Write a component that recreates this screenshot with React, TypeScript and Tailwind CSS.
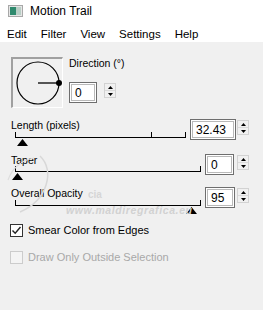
import * as React from 'react'

// Classic Win32 filter dialog: Motion Trail

const SpinButton: React.FC = () => (
  <div className="flex flex-col w-[12px] h-[15px] border border-[#d2d2d2] bg-[#f0f0f0]">
    <div className="flex-1 flex items-center justify-center border-b border-[#dadada]">
      <svg width="5" height="3" viewBox="0 0 5 3">
        <polygon points="2.5,0 5,3 0,3" fill="#000" />
      </svg>
    </div>
    <div className="flex-1 flex items-center justify-center">
      <svg width="5" height="3" viewBox="0 0 5 3">
        <polygon points="0,0 5,0 2.5,3" fill="#000" />
      </svg>
    </div>
  </div>
)

interface NumberBoxProps {
  value: string
  width: string
}

const NumberBox: React.FC<NumberBoxProps> = ({ value, width }) => (
  <div className={`h-[21px] ${width} border border-[#6e6e6e] p-px bg-white`}>
    <div className="h-full w-full border border-[#b9b9b9] bg-white flex items-center pl-[3px] text-[12px] leading-none text-black">
      {value}
    </div>
  </div>
)

const Thumb: React.FC<{ className: string }> = ({ className }) => (
  <svg className={className} width="11" height="7" viewBox="0 0 11 7">
    <polygon points="5.5,0 11,7 0,7" fill="#000" />
  </svg>
)

const Tick: React.FC = () => <div className="w-px h-[5px] bg-black" />

const Checkbox: React.FC<{ checked?: boolean; disabled?: boolean }> = ({ checked, disabled }) => (
  <div
    className={`w-[13px] h-[13px] border flex items-center justify-center ${
      disabled ? 'border-[#cccccc] bg-[#f4f4f4]' : 'border-[#333333] bg-white'
    }`}
  >
    {checked && (
      <svg width="11" height="11" viewBox="0 0 11 11">
        <polyline points="1.5,5.5 4.2,8.3 9.5,2" fill="none" stroke="#222" strokeWidth="1.4" />
      </svg>
    )}
  </div>
)

export default function App() {
  return (
    <div className="relative w-[263px] h-[310px] overflow-hidden flex flex-col bg-[#f0f0f0] font-['Liberation_Sans',Arial,sans-serif] text-black">
      {/* Title bar */}
      <div className="h-[22px] bg-white flex items-center pl-[8px]">
        <div className="w-[15px] h-[12px] border border-[#a8a8a8] bg-[#e6e6e6] p-px flex">
          <div className="w-[6px] h-full bg-[#2f8a6e]" />
          <div className="flex-1 h-full bg-[#b9cfc6]" />
        </div>
        <span className="ml-[7px] text-[12px] leading-[14px]">Motion Trail</span>
      </div>

      {/* Menu bar */}
      <div className="h-[20px] bg-white flex items-start pt-[5px] pl-[7px] gap-[14px] text-[11.5px] leading-[14px]">
        <span>Edit</span>
        <span>Filter</span>
        <span>View</span>
        <span>Settings</span>
        <span>Help</span>
      </div>

      {/* Body */}
      <div className="flex-1 flex flex-col text-[10.5px] leading-[13px]">
        {/* Direction */}
        <div className="mt-[15px] ml-[11px] flex">
          <div className="w-[52px] h-[51px] border-l-2 border-t-2 border-[#a0a0a0] border-r border-b border-r-white border-b-white">
            <svg width="49" height="48" viewBox="0 0 49 48">
              <circle cx="25" cy="24" r="21" fill="none" stroke="#000" strokeWidth="1.2" />
              <line x1="25" y1="24" x2="46" y2="24" stroke="#555" strokeWidth="2" />
              <circle cx="46" cy="24" r="3" fill="#000" />
            </svg>
          </div>
          <div className="ml-[6px] flex flex-col">
            <span>Direction (°)</span>
            <div className="mt-[12px] flex items-start">
              <NumberBox value="0" width="w-[28px]" />
              <div className="ml-[7px] mt-px">
                <SpinButton />
              </div>
            </div>
          </div>
        </div>

        {/* Length */}
        <div className="mt-[11px] flex items-start">
          <div className="w-[190px] flex flex-col">
            <span className="pl-[11px]">Length (pixels)</span>
            <div className="ml-[15px] w-[171px] h-[6px] border-b border-black flex items-end">
              <Tick />
              <div className="w-[135px]" />
              <Tick />
              <div className="flex-1" />
              <Tick />
            </div>
            <Thumb className="ml-[17px] mt-px" />
          </div>
          <NumberBox value="32.43" width="w-[46px]" />
          <div className="ml-px mt-px">
            <SpinButton />
          </div>
        </div>

        {/* Taper */}
        <div className="mt-[8px] flex items-start">
          <div className="w-[205px] flex flex-col">
            <span className="pl-[11px]">Taper</span>
            <div className="ml-[15px] w-[186px] h-[5px] border-b border-black flex items-end justify-between">
              <Tick />
              <Tick />
            </div>
            <Thumb className="ml-[12px] mt-px" />
          </div>
          <NumberBox value="0" width="w-[29px]" />
          <div className="ml-[3px] mt-px">
            <SpinButton />
          </div>
        </div>

        {/* Overall Opacity */}
        <div className="mt-[7px] flex items-start">
          <div className="w-[205px] flex flex-col">
            <span className="pl-[11px]">Overall Opacity</span>
            <div className="ml-[15px] w-[186px] h-[6px] border-b border-black flex items-end justify-between">
              <Tick />
              <Tick />
            </div>
            <Thumb className="ml-[186px] mt-px" />
          </div>
          <NumberBox value="95" width="w-[30px]" />
          <div className="ml-[2px] mt-px">
            <SpinButton />
          </div>
        </div>

        {/* Checkboxes */}
        <div className="mt-[10px] ml-[10px] flex items-center gap-[5px]">
          <Checkbox checked />
          <span className="text-[11px]">Smear Color from Edges</span>
        </div>
        <div className="mt-[14px] ml-[10px] flex items-center gap-[5px]">
          <Checkbox disabled />
          <span className="text-[11px] text-[#a8a8a8]">Draw Only Outside Selection</span>
        </div>
      </div>

      {/* Watermark */}
      <svg className="absolute left-0 top-[150px] pointer-events-none" width="60" height="70" viewBox="0 0 60 70">
        <path d="M40 6 C 55 20, 48 50, 20 62" fill="none" stroke="#d8d8d8" strokeWidth="1.5" />
        <path d="M8 30 C 12 18, 22 10, 34 8" fill="none" stroke="#dedede" strokeWidth="1.2" />
      </svg>
      <span className="absolute left-[88px] top-[187px] text-[10px] font-bold text-[#d6d6d6] pointer-events-none">
        cia
      </span>
      <span className="absolute left-[66px] top-[203px] text-[10.5px] font-bold italic tracking-[0.6px] text-[#d2d2d2] pointer-events-none">
        www.maldiregrafica.eu
      </span>
    </div>
  )
}
